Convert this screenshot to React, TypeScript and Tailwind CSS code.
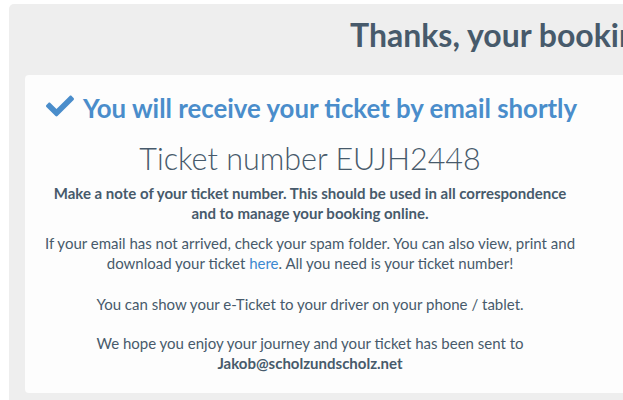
import React from 'react';
import { FaCheck } from 'react-icons/fa';

export default function App() {
  return (
    <div
      className="w-[623px] h-[400px] overflow-hidden bg-white pl-[9px] pt-[4px]"
      style={{ fontFamily: 'Lato, "Open Sans", sans-serif' }}
    >
      <div className="w-[900px] h-[420px] bg-[#eeeeee] rounded-tl-[5px]">
        <div className="h-[71px] pl-[341px] pt-[13px] whitespace-nowrap">
          <h1 className="text-[32px] leading-[36px] font-bold text-[#475a6b]">
            Thanks, your booking is confirmed
          </h1>
        </div>
        <div className="ml-[16px] w-[860px] h-[318px] bg-[#fdfdfd] rounded-sm pt-[18px]">
          <div className="w-[570px]">
            <div className="flex items-center gap-[7px] pl-[19px]">
              <FaCheck className="shrink-0 text-[#4a8dcb] w-[32px] h-[28px] -mt-[4px]" />
              <h2 className="text-[25.8px] leading-[30px] font-bold text-[#4a8dcb]">
                You will receive your ticket by email shortly
              </h2>
            </div>
            <div className="text-center text-[#475a6b] text-[15px] leading-[20px]">
              <p className="mt-[17px] text-[30.5px] leading-[36px] font-light">
                Ticket number EUJH2448
              </p>
              <p className="mt-[7px] font-bold">
                Make a note of your ticket number. This should be used in all correspondence
                <br />
                and to manage your booking online.
              </p>
              <p className="mt-[10px]">
                If your email has not arrived, check your spam folder. You can also view, print and
                <br />
                download your ticket <span className="text-[#3b88d0]">here</span>. All you need is your ticket number!
              </p>
              <p className="mt-[21px]">You can show your e-Ticket to your driver on your phone / tablet.</p>
              <p className="mt-[19px]">
                We hope you enjoy your journey and your ticket has been sent to
                <br />
                <span className="font-bold">Jakob@scholzundscholz.net</span>
              </p>
            </div>
          </div>
        </div>
      </div>
    </div>
  );
}
